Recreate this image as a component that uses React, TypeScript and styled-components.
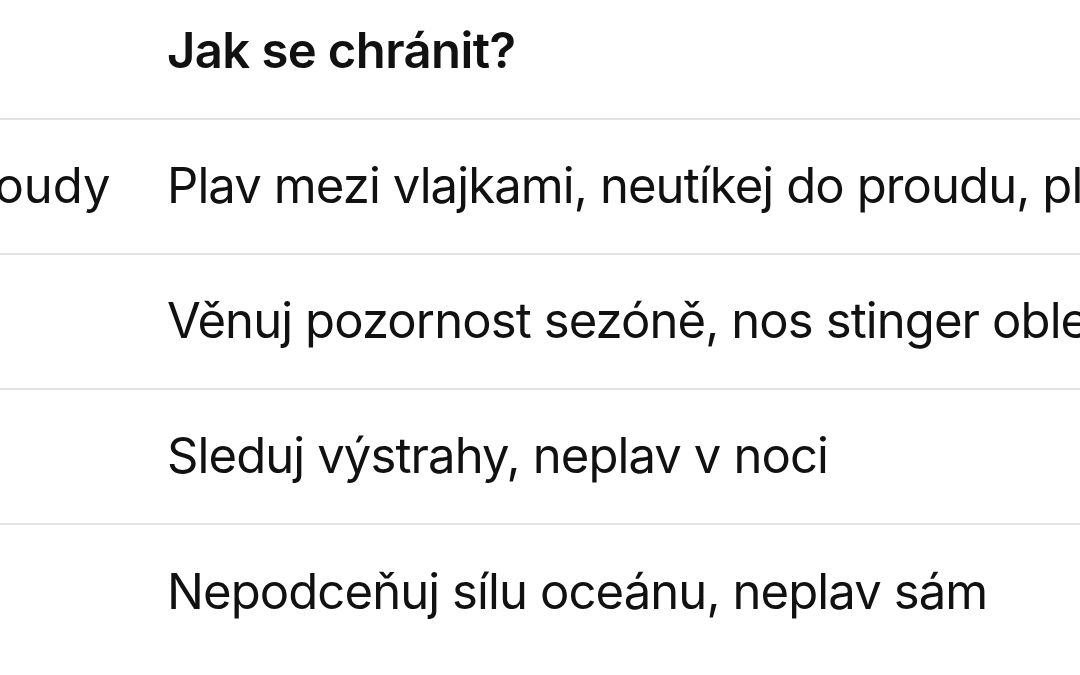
import React from 'react';
import styled, { createGlobalStyle } from 'styled-components';

const GlobalStyle = createGlobalStyle`
  html, body {
    margin: 0;
    padding: 0;
    background: #ffffff;
    overflow: hidden;
  }
  body {
    font-family: Inter, "Noto Sans", "Liberation Sans", sans-serif;
    color: #111111;
    -webkit-font-smoothing: antialiased;
  }
`;

const Page = styled.div`
  width: 1080px;
  height: 675px;
  overflow: hidden;
  background: #ffffff;
`;

const Table = styled.div`
  display: grid;
  grid-template-columns: 333px max-content;
  column-gap: 60px;
  margin-left: -226px;
  width: 1400px;
`;

const Row = styled.div<{ $header?: boolean }>`
  display: grid;
  grid-template-columns: subgrid;
  grid-column: 1 / -1;
  align-items: center;
  height: ${p => (p.$header ? '120px' : '135px')};
  padding-bottom: ${p => (p.$header ? '15px' : '0')};
  box-sizing: border-box;
  border-bottom: 2px solid #e2e2e2;

  &:last-child {
    border-bottom: none;
  }
`;

const Cell = styled.div<{ $header?: boolean; $first?: boolean }>`
  font-size: 49px;
  font-weight: ${p => (p.$header ? 600 : 400)};
  letter-spacing: ${p => (p.$header ? '-0.6px' : p.$first ? '0' : '-0.9px')};
  white-space: nowrap;
  line-height: 1.2;
`;

const rows = [
  ['Trhavé proudy', 'Plav mezi vlajkami, neutíkej do proudu, plav podél břehu'],
  ['Medúzy', 'Věnuj pozornost sezóně, nos stinger oblek'],
  ['Žraloci', 'Sleduj výstrahy, neplav v noci'],
  ['Vlny', 'Nepodceňuj sílu oceánu, neplav sám'],
];

const App = () => {
  return (
    <Page>
      <GlobalStyle />
      <Table>
        <Row $header>
          <Cell $header $first>Riziko</Cell>
          <Cell $header>Jak se chránit?</Cell>
        </Row>
        {rows.map(([danger, tip]) => (
          <Row key={danger}>
            <Cell $first>{danger}</Cell>
            <Cell>{tip}</Cell>
          </Row>
        ))}
      </Table>
    </Page>
  );
};

export default App;
